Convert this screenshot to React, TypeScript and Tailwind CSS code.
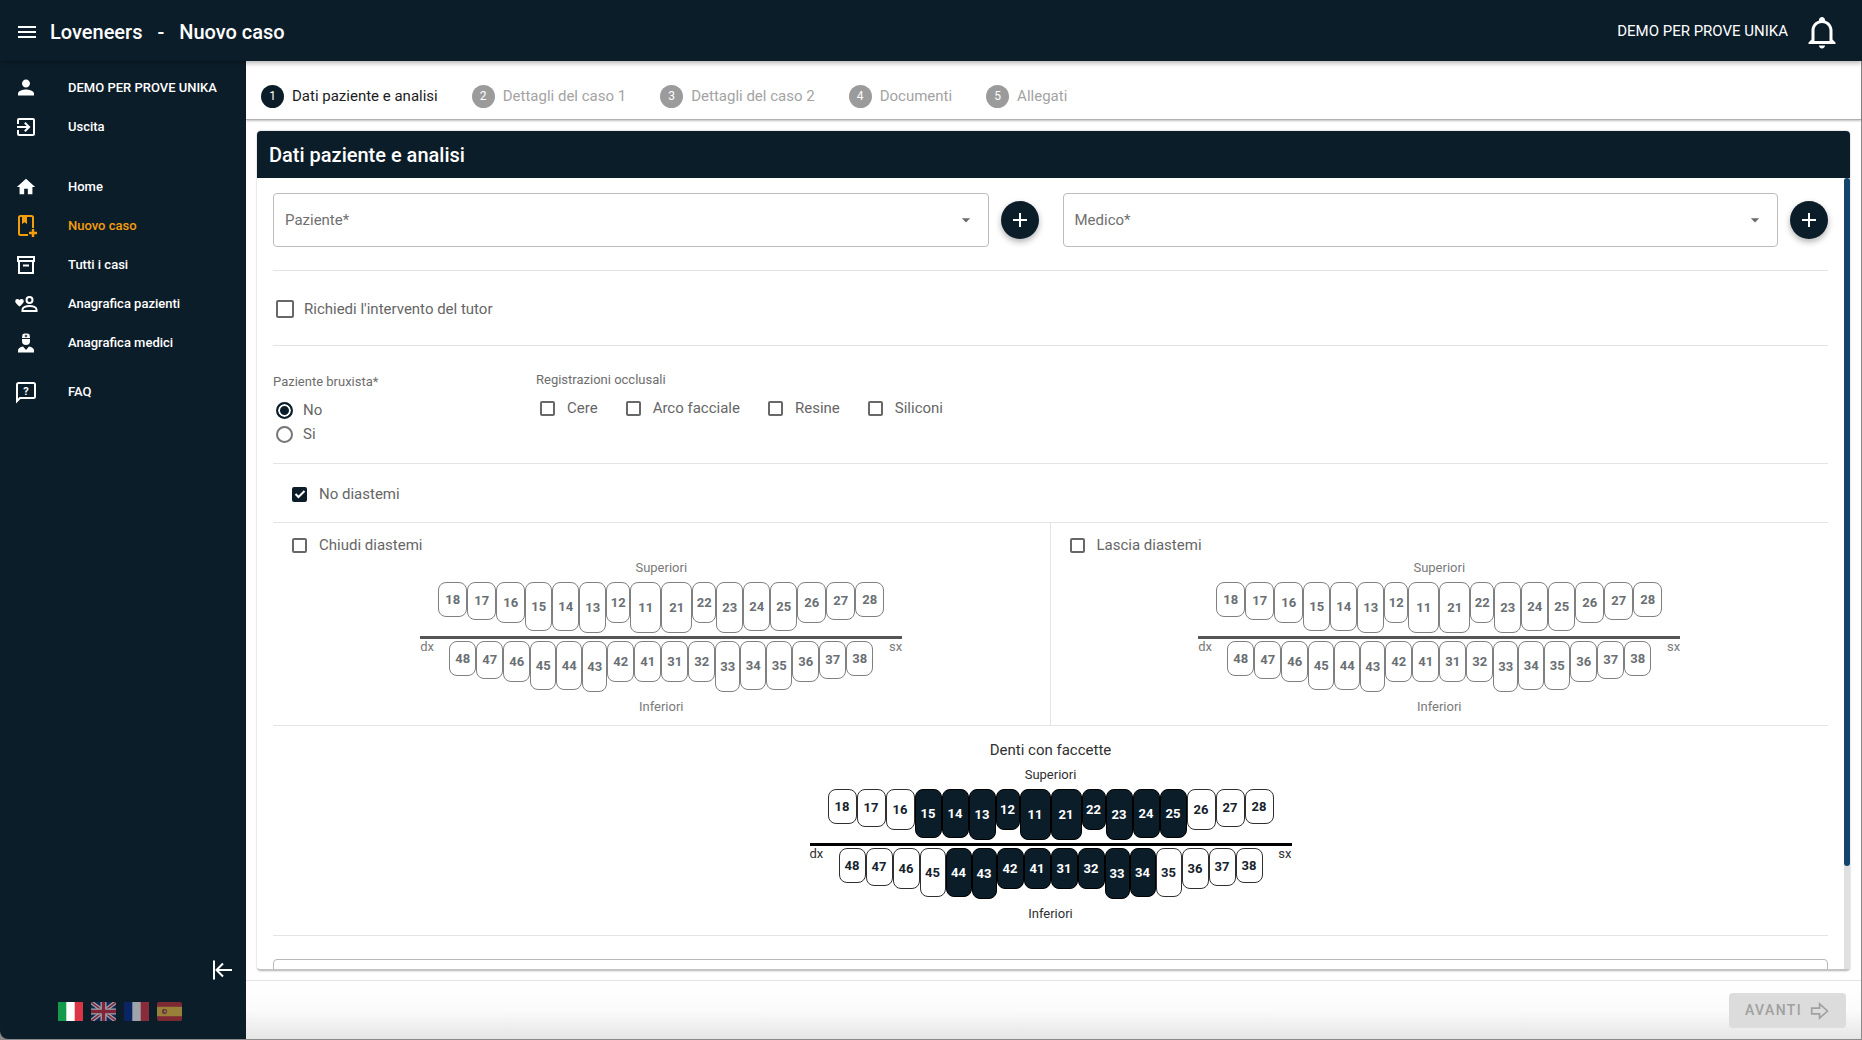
import { useState } from "react";
import type { ReactNode } from "react";
import clsx from "clsx";
import { MdArrowDropDown, MdExitToApp, MdHome, MdMenu, MdPerson } from "react-icons/md";

type ToothShape = {
  id: number;
  size: string;
};

const UPPER: ToothShape[] = [
  { id: 18, size: "w-[29px] h-[35px]" },
  { id: 17, size: "w-[29px] h-[38px]" },
  { id: 16, size: "w-[29px] h-[41px]" },
  { id: 15, size: "w-[27px] h-[49px]" },
  { id: 14, size: "w-[27px] h-[49px]" },
  { id: 13, size: "w-[27px] h-[51px]" },
  { id: 12, size: "w-[24px] h-[41px]" },
  { id: 11, size: "w-[31px] h-[51px]" },
  { id: 21, size: "w-[31px] h-[51px]" },
  { id: 22, size: "w-[24px] h-[41px]" },
  { id: 23, size: "w-[27px] h-[51px]" },
  { id: 24, size: "w-[27px] h-[49px]" },
  { id: 25, size: "w-[27px] h-[49px]" },
  { id: 26, size: "w-[29px] h-[41px]" },
  { id: 27, size: "w-[29px] h-[38px]" },
  { id: 28, size: "w-[29px] h-[35px]" },
];

const LOWER: ToothShape[] = [
  { id: 48, size: "w-[27px] h-[35px]" },
  { id: 47, size: "w-[27px] h-[38px]" },
  { id: 46, size: "w-[27px] h-[41px]" },
  { id: 45, size: "w-[26px] h-[49px]" },
  { id: 44, size: "w-[26px] h-[49px]" },
  { id: 43, size: "w-[25px] h-[51px]" },
  { id: 42, size: "w-[27px] h-[41px]" },
  { id: 41, size: "w-[27px] h-[41px]" },
  { id: 31, size: "w-[27px] h-[41px]" },
  { id: 32, size: "w-[27px] h-[41px]" },
  { id: 33, size: "w-[25px] h-[51px]" },
  { id: 34, size: "w-[26px] h-[49px]" },
  { id: 35, size: "w-[26px] h-[49px]" },
  { id: 36, size: "w-[27px] h-[41px]" },
  { id: 37, size: "w-[27px] h-[38px]" },
  { id: 38, size: "w-[27px] h-[35px]" },
];

const VENEERS = [15, 14, 13, 12, 11, 21, 22, 23, 24, 25, 44, 43, 42, 41, 31, 32, 33, 34];

const STEPS = ["Dati paziente e analisi", "Dettagli del caso 1", "Dettagli del caso 2", "Documenti", "Allegati"];

/* ---------- icons ---------- */

function BookPlusIcon() {
  return (
    <svg viewBox="0 0 24 24" className="size-6" fill="none" stroke="currentColor" strokeWidth="2">
      <path d="M14 21H6.500A1.500 1.500 0 0 1 5 19.500V3.500A1.500 1.500 0 0 1 6.500 2H17.500A1.500 1.500 0 0 1 19 3.500V14" />
      <path d="M8 2V10L10.500 8.300L13 10V2Z" fill="currentColor" stroke="none" />
      <path d="M19 15V23M15 19H23" strokeWidth="2.400" />
    </svg>
  );
}

function ArchiveIcon() {
  return (
    <svg viewBox="0 0 24 24" className="size-6" fill="none" stroke="currentColor" strokeWidth="2">
      <path d="M4 4H20V8H4ZM5 8V20H19V8" />
      <path d="M9 12.500H15" />
    </svg>
  );
}

function AccountHeartIcon() {
  return (
    <svg viewBox="0 0 24 24" className="size-6" fill="none" stroke="currentColor" strokeWidth="2">
      <circle cx="15.500" cy="8" r="3" />
      <path d="M8.500 19V17.500C8.500 15.300 12 14 15.500 14S22.500 15.300 22.500 17.500V19Z" />
      <path
        d="M5.500 14.500L4.800 13.900C2.400 11.700 1.200 10.600 1.200 9.200A2.200 2.200 0 0 1 3.400 7C4.200 7 5 7.400 5.500 8A2.800 2.800 0 0 1 7.600 7A2.200 2.200 0 0 1 9.800 9.200C9.800 10.600 8.600 11.700 6.200 13.900Z"
        fill="currentColor"
        stroke="none"
      />
    </svg>
  );
}

function DoctorIcon() {
  return (
    <svg viewBox="0 0 24 24" className="size-6" fill="currentColor">
      <path
        fillRule="evenodd"
        d="M8.500 3.500C9.500 2.300 14.500 2.300 15.500 3.500L16 7H8ZM11.500 3.700V4.500H10.700V5.500H11.500V6.300H12.500V5.500H13.300V4.500H12.500V3.700Z"
      />
      <path d="M8 8H16V10A4 4 0 0 1 8 10Z" />
      <path d="M9 15.500L12 19L15 15.500C18 16 20 17.500 20 19.500V21.500H4V19.500C4 17.500 6 16 9 15.500Z" />
    </svg>
  );
}

function QuestionIcon() {
  return (
    <svg viewBox="0 0 24 24" className="size-6" fill="none" stroke="currentColor" strokeWidth="2">
      <path d="M3 21V4.500A1.500 1.500 0 0 1 4.500 3H19.500A1.500 1.500 0 0 1 21 4.500V16.500A1.500 1.500 0 0 1 19.500 18H6Z" />
      <text
        x="12"
        y="14.500"
        textAnchor="middle"
        fontSize="11"
        fontWeight="700"
        fill="currentColor"
        stroke="none"
      >
        ?
      </text>
    </svg>
  );
}

function BellIcon() {
  return (
    <svg viewBox="0 0 24 24" className="size-9" fill="currentColor">
      <path d="M10 21H14C14 22.1 13.1 23 12 23S10 22.1 10 21M21 19V20H3V19L5 17V11C5 7.900 7 5.200 10 4.300V4C10 2.900 10.900 2 12 2S14 2.900 14 4V4.300C17 5.200 19 7.900 19 11V17L21 19M17 11C17 8.200 14.800 6 12 6S7 8.200 7 11V18H17V11Z" />
    </svg>
  );
}

function CollapseIcon() {
  return (
    <svg viewBox="0 0 24 24" className="size-6" fill="none" stroke="currentColor" strokeWidth="2">
      <path d="M4 2.500V21.500M22 12H6.500M13 5.500L6.500 12L13 18.500" />
    </svg>
  );
}

function ArrowRightIcon() {
  return (
    <svg viewBox="0 0 24 24" className="size-5" fill="none" stroke="currentColor" strokeWidth="2">
      <path d="M2 8.500H11.500V3.500L21 12L11.500 20.500V15.500H2Z" />
    </svg>
  );
}

/* ---------- flags ---------- */

function ItalyFlag() {
  return (
    <svg viewBox="0 0 25 19" className="h-[19px] w-[25px]">
      <rect width="25" height="19" fill="#fff" />
      <rect width="8.300" height="19" fill="#159a4c" />
      <rect x="16.700" width="8.300" height="19" fill="#dc3545" />
    </svg>
  );
}

function UkFlag() {
  return (
    <svg viewBox="0 0 25 19" className="h-[19px] w-[25px]">
      <rect width="25" height="19" fill="#1c2d72" />
      <path d="M0 0L25 19M25 0L0 19" stroke="#fff" strokeWidth="4" />
      <path d="M0 0L25 19M25 0L0 19" stroke="#d02a45" strokeWidth="1.500" />
      <path d="M12.500 0V19M0 9.500H25" stroke="#fff" strokeWidth="6" />
      <path d="M12.500 0V19M0 9.500H25" stroke="#d02a45" strokeWidth="3.400" />
    </svg>
  );
}

function FranceFlag() {
  return (
    <svg viewBox="0 0 25 19" className="h-[19px] w-[25px]">
      <rect width="25" height="19" fill="#fff" />
      <rect width="8.300" height="19" fill="#0b2a8a" />
      <rect x="16.700" width="8.300" height="19" fill="#dc3545" />
    </svg>
  );
}

function SpainFlag() {
  return (
    <svg viewBox="0 0 25 19" className="h-[19px] w-[25px] rounded-[2px]">
      <rect width="25" height="19" fill="#c8323c" />
      <rect y="4.800" width="25" height="9.400" fill="#f5c342" />
      <rect x="5" y="7" width="5" height="5" rx="2" fill="#a8452f" />
      <rect x="7" y="8.500" width="2" height="2" fill="#e0b0a0" />
    </svg>
  );
}

/* ---------- form parts ---------- */

type CheckboxProps = {
  label: string;
  large?: boolean;
  defaultChecked?: boolean;
};

function Checkbox({ label, large, defaultChecked }: CheckboxProps) {
  return (
    <label className={clsx("flex h-6 items-center text-[15px] text-[#666]", large ? "gap-[10px]" : "gap-3")}>
      <span className="grid place-items-center">
        <input
          type="checkbox"
          defaultChecked={defaultChecked}
          className={clsx(
            "peer col-start-1 row-start-1 appearance-none rounded-[2px] border-2 border-[#686868] checked:border-[#0c1d2a] checked:bg-[#0c1d2a]",
            large ? "size-[18px]" : "size-[15px]"
          )}
        />
        <svg
          viewBox="0 0 12 12"
          className="pointer-events-none invisible col-start-1 row-start-1 size-3 peer-checked:visible"
          fill="none"
          stroke="#fff"
          strokeWidth="2"
        >
          <path d="M1.500 6L4.500 9L10.500 3" />
        </svg>
      </span>
      {label}
    </label>
  );
}

function Radio({ label, defaultChecked }: { label: string; defaultChecked?: boolean }) {
  return (
    <label className="flex h-6 items-center gap-[10px] text-[15px] text-[#666]">
      <input
        type="radio"
        name="bruxista"
        defaultChecked={defaultChecked}
        className="size-[17px] appearance-none rounded-full border-2 border-[#767676] checked:border-[#0c1d2a] checked:bg-[#0c1d2a] checked:shadow-[inset_0_0_0_2px_#fff]"
      />
      {label}
    </label>
  );
}

function SelectWithAdd({ label }: { label: string }) {
  return (
    <div className="flex items-center gap-3">
      <div className="grid h-[54px] flex-1 items-center rounded-[4px] border border-[#bdbdbd]">
        <select
          aria-label={label}
          className="col-start-1 row-start-1 h-full w-full appearance-none bg-transparent px-[11px] text-[15px] text-[#707070]"
        >
          <option>{label}</option>
        </select>
        <MdArrowDropDown className="pointer-events-none col-start-1 row-start-1 mr-3 size-5 justify-self-end text-[#6b6b6b]" />
      </div>
      <button
        type="button"
        aria-label={`Aggiungi ${label}`}
        className="flex size-[38px] items-center justify-center rounded-full bg-[#0c1d2a] text-white shadow-[0_3px_6px_rgba(0,0,0,0.3)]"
      >
        <svg viewBox="0 0 14 14" className="size-[14px]" stroke="currentColor" strokeWidth="2">
          <path d="M7 0V14M0 7H14" />
        </svg>
      </button>
    </div>
  );
}

type ToothProps = {
  tooth: ToothShape;
  selected: boolean;
  disabled: boolean;
  onToggle: (id: number) => void;
};

function Tooth({ tooth, selected, disabled, onToggle }: ToothProps) {
  return (
    <button
      type="button"
      disabled={disabled}
      aria-pressed={selected}
      onClick={() => onToggle(tooth.id)}
      className={clsx(
        "flex items-center justify-center rounded-[8px] border text-[13px] font-bold",
        tooth.size,
        disabled && "border-[#808080] bg-white text-[#6a6f74]",
        !disabled && selected && "border-black bg-[#0c1d2a] text-white",
        !disabled && !selected && "border-[#303030] bg-white text-[#16222c]"
      )}
    >
      {tooth.id}
    </button>
  );
}

function TeethChart({ initial = [], disabled = false }: { initial?: number[]; disabled?: boolean }) {
  const [selected, setSelected] = useState<number[]>(initial);

  const toggle = (id: number) => {
    setSelected((prev) => (prev.includes(id) ? prev.filter((t) => t !== id) : [...prev, id]));
  };

  const renderTeeth = (teeth: ToothShape[]) =>
    teeth.map((tooth) => (
      <Tooth
        key={tooth.id}
        tooth={tooth}
        selected={selected.includes(tooth.id)}
        disabled={disabled}
        onToggle={toggle}
      />
    ));

  return (
    <div
      className={clsx(
        "mx-auto flex w-[482px] flex-col text-center text-[13px] leading-5",
        disabled ? "text-[#7a7a7a]" : "text-[#303030]"
      )}
    >
      <div>Superiori</div>
      <div className="mt-1 flex h-[54px] items-start justify-center">{renderTeeth(UPPER)}</div>
      <div className={clsx("h-[3px]", disabled ? "bg-[#555]" : "bg-black")} />
      <div className="mt-[2px] flex h-[52px] items-start justify-between">
        <span className="w-4 text-left leading-3">dx</span>
        <div className="flex items-start">{renderTeeth(LOWER)}</div>
        <span className="w-4 text-right leading-3">sx</span>
      </div>
      <div className="mt-1">Inferiori</div>
    </div>
  );
}

/* ---------- layout ---------- */

function NavItem({ icon, label, active }: { icon: ReactNode; label: string; active?: boolean }) {
  return (
    <a
      href="#"
      className={clsx(
        "flex h-[39px] items-center gap-[30px] pl-[14px] text-[13px] font-medium",
        active ? "text-[#f59e0b]" : "text-white"
      )}
    >
      <span className="flex size-6 items-center justify-center">{icon}</span>
      {label}
    </a>
  );
}

function Sidebar() {
  return (
    <aside className="flex w-[246px] shrink-0 flex-col rounded-bl-[8px] bg-[#0c1d2a] pt-[7px]">
      <nav>
        <NavItem icon={<MdPerson className="size-[25px]" />} label="DEMO PER PROVE UNIKA" />
        <NavItem icon={<MdExitToApp className="size-6" />} label="Uscita" />
        <div className="mt-[21px]">
          <NavItem icon={<MdHome className="size-[22px]" />} label="Home" />
          <NavItem icon={<BookPlusIcon />} label="Nuovo caso" active />
          <NavItem icon={<ArchiveIcon />} label="Tutti i casi" />
          <NavItem icon={<AccountHeartIcon />} label="Anagrafica pazienti" />
          <NavItem icon={<DoctorIcon />} label="Anagrafica medici" />
        </div>
        <div className="mt-[10px]">
          <NavItem icon={<QuestionIcon />} label="FAQ" />
        </div>
      </nav>
      <button type="button" aria-label="Riduci menu" className="mt-auto mr-3 self-end text-white">
        <CollapseIcon />
      </button>
      <div className="mt-5 mb-[18px] flex gap-2 pl-[58px]">
        <button type="button" aria-label="Italiano">
          <ItalyFlag />
        </button>
        <button type="button" aria-label="English" className="opacity-60">
          <UkFlag />
        </button>
        <button type="button" aria-label="Français" className="opacity-60">
          <FranceFlag />
        </button>
        <button type="button" aria-label="Español" className="opacity-60">
          <SpainFlag />
        </button>
      </div>
    </aside>
  );
}

function Stepper() {
  return (
    <ol className="flex h-[59px] shrink-0 items-center gap-[34px] border-b border-[#b0b0b0] pt-3 pl-[15px] shadow-[0_1px_2px_rgba(0,0,0,0.25)]">
      {STEPS.map((step, index) => (
        <li
          key={step}
          className={clsx("flex items-center gap-2 text-[15px]", index === 0 ? "text-[#1c1c1c]" : "text-[#a3a3a3]")}
        >
          <span
            className={clsx(
              "flex size-[23px] items-center justify-center rounded-full text-[12px] text-white",
              index === 0 ? "bg-[#0c1d2a]" : "bg-[#9b9b9b]"
            )}
          >
            {index + 1}
          </span>
          {step}
        </li>
      ))}
    </ol>
  );
}

function CaseForm() {
  return (
    <form className="min-w-0 flex-1 overflow-hidden px-4 pt-[15px]">
      <div className="grid grid-cols-2 gap-6 border-b border-[#e4e4e4] pb-[23px]">
        <SelectWithAdd label="Paziente*" />
        <SelectWithAdd label="Medico*" />
      </div>

      <div className="flex h-[75px] items-center border-b border-[#e4e4e4] pt-[2px] pl-[3px]">
        <Checkbox label="Richiedi l'intervento del tutor" large />
      </div>

      <div className="flex h-[118px] border-b border-[#e4e4e4]">
        <fieldset className="w-[263px] pt-[26px]">
          <legend className="float-left mb-[6px] w-full text-[13px] leading-5 text-[#6e6e6e]">Paziente bruxista*</legend>
          <div className="clear-both pl-[3px]">
            <Radio label="No" defaultChecked />
            <Radio label="Si" />
          </div>
        </fieldset>
        <fieldset className="pt-6">
          <legend className="float-left mb-[6px] w-full text-[13px] leading-5 text-[#6e6e6e]">
            Registrazioni occlusali
          </legend>
          <div className="clear-both flex gap-7 pl-1">
            <Checkbox label="Cere" />
            <Checkbox label="Arco facciale" />
            <Checkbox label="Resine" />
            <Checkbox label="Siliconi" />
          </div>
        </fieldset>
      </div>

      <div className="flex h-[59px] items-center border-b border-[#e4e4e4] pt-[2px] pl-[19px]">
        <Checkbox label="No diastemi" defaultChecked />
      </div>

      <div className="grid grid-cols-2 border-b border-[#e4e4e4]">
        <div className="border-r border-[#e4e4e4] pt-[10px] pb-2">
          <div className="mb-px flex pl-[19px]">
            <Checkbox label="Chiudi diastemi" />
          </div>
          <TeethChart disabled />
        </div>
        <div className="pt-[10px] pb-2">
          <div className="mb-px flex pl-[19px]">
            <Checkbox label="Lascia diastemi" />
          </div>
          <TeethChart disabled />
        </div>
      </div>

      <div className="border-b border-[#e4e4e4] pt-3 pb-[11px]">
        <h3 className="mb-[3px] text-center text-[15px] leading-6 text-[#303030]">Denti con faccette</h3>
        <TeethChart initial={VENEERS} />
      </div>

      <textarea
        aria-label="Note"
        rows={4}
        className="mt-[23px] block w-full resize-none rounded-[4px] border border-[#b8b8b8]"
      />
    </form>
  );
}

export default function App() {
  return (
    <div className="flex h-screen flex-col bg-[#8a8a8a] font-[Roboto,sans-serif]">
      <header className="z-10 flex h-[61px] shrink-0 items-center bg-[#0c1d2a] pt-[2px] pr-[22px] pl-[15px] text-white shadow-[0_2px_5px_rgba(0,0,0,0.3)]">
        <button type="button" aria-label="Menu">
          <MdMenu className="size-6" />
        </button>
        <h1 className="ml-[11px] flex gap-[15px] text-[20px] font-medium">
          <span>Loveneers</span>
          <span>-</span>
          <span>Nuovo caso</span>
        </h1>
        <span className="mr-4 ml-auto text-[15px]">DEMO PER PROVE UNIKA</span>
        <button type="button" aria-label="Notifiche">
          <BellIcon />
        </button>
      </header>

      <div className="flex min-h-0 flex-1 pb-px">
        <Sidebar />
        <main className="mr-px flex min-w-0 flex-1 flex-col bg-white">
          <Stepper />
          <section className="mt-[11px] mr-[11px] ml-[11px] flex min-h-0 flex-1 flex-col overflow-hidden rounded-[4px] border-b-2 border-[#c4c4c4] shadow-[0_0_2px_rgba(0,0,0,0.3)]">
            <h2 className="flex h-[47px] shrink-0 items-center bg-[#0c1d2a] pl-3 text-[20px] font-medium text-white">
              Dati paziente e analisi
            </h2>
            <div className="flex min-h-0 flex-1">
              <CaseForm />
              <div className="w-[6px] bg-[#e0e0e0]">
                <div className="h-[87%] rounded-full bg-[#11456b]" />
              </div>
            </div>
          </section>
          <footer className="mt-[9px] flex h-[59px] shrink-0 items-center justify-end border-t border-[#e4e4e4] bg-linear-to-b from-white via-[#fbfbfb] to-[#e6e6e6] pt-px pr-[15px]">
            <button
              type="button"
              disabled
              className="flex h-[35px] w-[117px] items-center justify-center gap-2 rounded-[4px] bg-[#dcdcdc] text-[14px] font-medium tracking-widest text-[#a0a0a0]"
            >
              AVANTI
              <ArrowRightIcon />
            </button>
          </footer>
        </main>
      </div>
    </div>
  );
}
